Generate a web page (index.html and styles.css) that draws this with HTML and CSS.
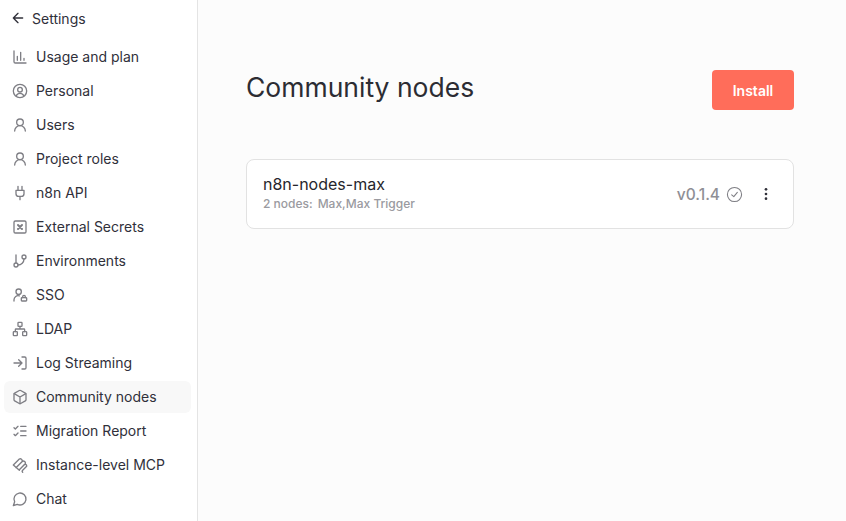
FILE: index.html
```html
<!DOCTYPE html>
<html lang="en">
<head>
    <meta charset="utf-8">
    <title>Community nodes</title>
    <link rel="stylesheet" href="styles.css">
</head>
<body>
    <aside class="sidebar">
        <div class="back">
            <svg viewBox="0 0 24 24" class="backIcon"><path d="M19 12H5M12 19l-7-7 7-7"/></svg>
            <span>Settings</span>
        </div>
        <nav class="menu">
            <a class="item"><svg viewBox="0 0 24 24" class="icon"><path d="M3 3v16a2 2 0 0 0 2 2h16M8 17v-6M13 17V5M18 17v-3"/></svg><span>Usage and plan</span></a>
            <a class="item"><svg viewBox="0 0 24 24" class="icon"><circle cx="12" cy="12" r="10"/><circle cx="12" cy="10" r="3.5"/><path d="M6.500 19c1-2.500 3-3.500 5.500-3.500s4.500 1 5.500 3.500"/></svg><span>Personal</span></a>
            <a class="item"><svg viewBox="0 0 24 24" class="icon"><circle cx="12" cy="8" r="5"/><path d="M20 21a8 8 0 0 0-16 0"/></svg><span>Users</span></a>
            <a class="item"><svg viewBox="0 0 24 24" class="icon"><circle cx="12" cy="8" r="5"/><path d="M20 21a8 8 0 0 0-16 0"/></svg><span>Project roles</span></a>
            <a class="item"><svg viewBox="0 0 24 24" class="icon"><path d="M12 22v-5M9 8V2M15 8V2M18 8v5a4 4 0 0 1-4 4h-4a4 4 0 0 1-4-4V8z"/></svg><span>n8n API</span></a>
            <a class="item"><svg viewBox="0 0 24 24" class="icon"><rect x="3" y="3" width="18" height="18" rx="2"/><path d="m9 9 6 6M15 9l-6 6" stroke-width="3"/></svg><span>External Secrets</span></a>
            <a class="item"><svg viewBox="0 0 24 24" class="icon"><path d="M6 3v12M18 9a9 9 0 0 1-9 9"/><circle cx="18" cy="6" r="3"/><circle cx="6" cy="18" r="3"/></svg><span>Environments</span></a>
            <a class="item"><svg viewBox="0 0 24 24" class="icon"><circle cx="10" cy="7" r="4"/><path d="M3 21v-2a6 6 0 0 1 8-5.600"/><rect x="14" y="16" width="8" height="5" rx="1"/><path d="M16 16v-1.500a2 2 0 0 1 4 0V16"/></svg><span>SSO</span></a>
            <a class="item"><svg viewBox="0 0 24 24" class="icon"><rect x="9" y="2" width="6" height="6" rx="1"/><rect x="16" y="16" width="6" height="6" rx="1"/><rect x="2" y="16" width="6" height="6" rx="1"/><path d="M5 16v-3a1 1 0 0 1 1-1h12a1 1 0 0 1 1 1v3M12 12V8"/></svg><span>LDAP</span></a>
            <a class="item"><svg viewBox="0 0 24 24" class="icon"><path d="M15 3h4a2 2 0 0 1 2 2v14a2 2 0 0 1-2 2h-4M10 17l5-5-5-5M15 12H3"/></svg><span>Log Streaming</span></a>
            <a class="item active"><svg viewBox="0 0 24 24" class="icon"><path d="M21 8a2 2 0 0 0-1-1.730l-7-4a2 2 0 0 0-2 0l-7 4A2 2 0 0 0 3 8v8a2 2 0 0 0 1 1.730l7 4a2 2 0 0 0 2 0l7-4A2 2 0 0 0 21 16z"/><path d="m3.300 7 8.700 5 8.700-5M12 22V12"/></svg><span>Community nodes</span></a>
            <a class="item"><svg viewBox="0 0 24 24" class="icon"><path d="M13 5h8M13 12h8M13 19h8M3 17l2 2 4-4M3 7l2 2 4-4"/></svg><span>Migration Report</span></a>
            <a class="item"><svg viewBox="0 0 24 24" class="icon"><path d="M2 12 11 3a3 3 0 0 1 4 4L7 15M6 16l9-9a3 3 0 0 1 5 3l-9 9M11 19l8-8a2.500 2.500 0 0 1 3 3l-6 6c-1 1-1 2 0 3M2 12l9 8"/></svg><span>Instance-level MCP</span></a>
            <a class="item"><svg viewBox="0 0 24 24" class="icon"><path d="M7.900 20A9 9 0 1 0 4 16.100L2 22z"/></svg><span>Chat</span></a>
        </nav>
    </aside>
    <main class="content">
        <header class="head">
            <h1>Community nodes</h1>
            <button class="install">Install</button>
        </header>
        <section class="card">
            <div class="info">
                <div class="name">n8n-nodes-max</div>
                <div class="nodes"><span>2 nodes:</span><span>Max,Max Trigger</span></div>
            </div>
            <div class="meta">
                <span class="version">v0.1.4</span>
                <svg viewBox="0 0 24 24" class="check"><circle cx="12" cy="12" r="10"/><path d="m8 12.500 3 2.500 5-6"/></svg>
                <svg viewBox="0 0 24 24" class="dots"><circle cx="12" cy="5" r="2"/><circle cx="12" cy="12" r="2"/><circle cx="12" cy="19" r="2"/></svg>
            </div>
        </section>
    </main>
</body>
</html>
```
FILE: styles.css
```css
* {
    box-sizing: border-box;
}
html, body {
    height: 100%;
}
body {
    font-family: Inter, "Liberation Sans", sans-serif;
    margin: 0;
    display: flex;
    height: 521px;
    overflow: hidden;
    background-color: #fcfcfc;
    color: #30303a;
}
.sidebar {
    width: 198px;
    flex-shrink: 0;
    background-color: #ffffff;
    border-right: 1px solid #e4e4e4;
    padding: 9px 6px 0 4px;
}
.back {
    display: flex;
    align-items: center;
    gap: 6px;
    height: 18px;
    margin-bottom: 14px;
    padding-left: 6px;
    font-size: 14px;
}
.backIcon {
    width: 16px;
    height: 16px;
    fill: none;
    stroke: #30303a;
    stroke-width: 2;
    stroke-linecap: round;
    stroke-linejoin: round;
}
.menu {
    display: flex;
    flex-direction: column;
    gap: 2px;
}
.item {
    display: flex;
    align-items: center;
    gap: 8px;
    height: 32px;
    padding-left: 8px;
    border-radius: 6px;
    font-size: 14px;
}
.item span {
    margin-bottom: 2px;
}
.item.active {
    background-color: #f8f8f8;
}
.icon {
    width: 16px;
    height: 16px;
    flex-shrink: 0;
    fill: none;
    stroke: #7e7e84;
    stroke-width: 2;
    stroke-linecap: round;
    stroke-linejoin: round;
}
.content {
    flex: 1;
    padding: 69px 52px 0 48px;
}
.head {
    display: flex;
    justify-content: space-between;
    align-items: center;
    margin-bottom: 48px;
}
h1 {
    margin: 0 0 6px;
    font-size: 26.500px;
    font-weight: 400;
    line-height: 36px;
    color: #2c2c33;
}
.install {
    width: 82px;
    height: 40px;
    border: none;
    border-radius: 4px;
    background-color: #ff6d5a;
    color: #ffffff;
    font-family: inherit;
    font-size: 14px;
    font-weight: 600;
}
.card {
    display: flex;
    justify-content: space-between;
    align-items: center;
    height: 70px;
    padding: 0 16px;
    background-color: #ffffff;
    border: 1px solid #e2e2e2;
    border-radius: 8px;
}
.info {
    margin-bottom: 2px;
}
.name {
    font-size: 16px;
    font-weight: 400;
    line-height: 20px;
    color: #26262c;
}
.nodes {
    display: flex;
    gap: 5px;
    font-size: 12px;
    font-weight: 500;
    line-height: 16px;
    margin-top: 2px;
    color: #9a9aa0;
}
.meta {
    display: flex;
    align-items: center;
    color: #8f8f95;
}
.version {
    font-size: 15.500px;
    font-weight: 500;
}
.check {
    width: 17px;
    height: 17px;
    margin-left: 6px;
    fill: none;
    stroke: #7e7e84;
    stroke-width: 1.500;
    stroke-linecap: round;
    stroke-linejoin: round;
}
.dots {
    width: 16px;
    height: 16px;
    margin-left: 15px;
    margin-right: 3px;
    fill: #30303a;
}
```
